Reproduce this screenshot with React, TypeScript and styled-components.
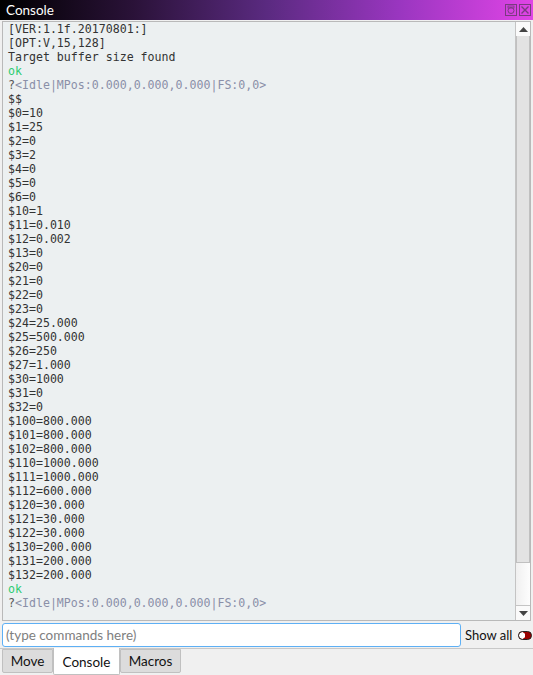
import React from "react";
import styled, { createGlobalStyle } from "styled-components";

const Global = createGlobalStyle`
  html, body { margin: 0; padding: 0; background: #f0f0f0; }
  body { width: 533px; height: 675px; overflow: hidden; }
`;

const Window = styled.div`
  width: 533px;
  height: 675px;
  display: flex;
  flex-direction: column;
  background: #f0f0f0;
  font-family: Lato, "Open Sans", sans-serif;
`;

const TitleBar = styled.div`
  height: 20px;
  flex: none;
  display: flex;
  align-items: center;
  justify-content: space-between;
  padding: 0 2px 0 6px;
  background: linear-gradient(90deg, #000000 0%, #2a1238 25%, #5a2a80 50%, #9a36c0 75%, #e044e6 100%);
  color: #ffffff;
  font-size: 13.5px;
`;

const TitleIcons = styled.div`
  display: flex;
  gap: 2px;
`;

const Body = styled.div`
  flex: 1;
  display: flex;
  flex-direction: column;
  padding: 1px 2px 0 2px;
  min-height: 0;
`;

const ConsoleBox = styled.div`
  height: 598px;
  flex: none;
  display: flex;
  border: 1px solid #b9b9b9;
  background: #ecf0f1;
`;

const Log = styled.div`
  flex: 1;
  padding: 0 0 0 5px;
  font-family: "DejaVu Sans Mono", monospace;
  font-size: 11.6px;
  line-height: 14px;
  color: #333333;
  white-space: pre;
  overflow: hidden;
`;

const Line = styled.div<{ $kind?: "ok" | "status" }>`
  height: 14px;
  color: ${(p) => (p.$kind === "ok" ? "#2ecc71" : p.$kind === "status" ? "#8a8fa8" : "#333333")};
`;

const Q = styled.span`
  color: #555555;
`;

const ScrollBar = styled.div`
  width: 14px;
  flex: none;
  display: flex;
  flex-direction: column;
  border-left: 1px solid #c4c4c4;
  background: #f9f9f9;
`;

const ScrollBtn = styled.div`
  height: 14px;
  flex: none;
  display: flex;
  align-items: center;
  justify-content: center;
  background: #fafafa;
`;

const Thumb = styled.div`
  height: 526px;
  flex: none;
  background: #e3e3e3;
  border-left: 1px solid #c0c0c0;
  border-right: 1px solid #c0c0c0;
  border-bottom: 1px solid #c0c0c0;
`;

const Track = styled.div`
  flex: 1;
  background: linear-gradient(90deg, #f0f0f0, #fdfdfd);
  border-bottom: 1px solid #c4c4c4;
`;

const InputRow = styled.div`
  display: flex;
  align-items: center;
  height: 27px;
  margin-top: 1px;
  gap: 4px;
`;

const CmdInput = styled.input`
  flex: none;
  width: 459px;
  height: 24px;
  box-sizing: border-box;
  border: 1px solid #5eb0f5;
  border-radius: 3px;
  background: #ffffff;
  padding: 0 3px;
  font-family: Lato, "Open Sans", sans-serif;
  font-size: 13.5px;
  color: #333;
  outline: none;
  &::placeholder { color: #808080; }
`;

const ShowAll = styled.label`
  flex: none;
  white-space: nowrap;
  font-size: 13px;
  color: #111;
  display: flex;
  align-items: center;
  gap: 6px;
`;

const Toggle = styled.span`
  flex: none;
  width: 12px;
  height: 7px;
  border: 1.5px solid #222;
  border-radius: 5px;
  background: radial-gradient(circle at 3px 3.5px, #ffffff 0 3px, transparent 3.5px), #9a0000;
`;

const TabBar = styled.div`
  display: flex;
  align-items: flex-start;
  height: 27px;
  border-top: 1px solid #c8c8c8;
  margin: 0 -2px;
  padding-left: 2px;
`;

const Tab = styled.div<{ $active?: boolean; $w: number }>`
  width: ${(p) => p.$w}px;
  height: ${(p) => (p.$active ? "27px" : "24px")};
  margin-top: ${(p) => (p.$active ? "-1px" : "0")};
  box-sizing: border-box;
  display: flex;
  align-items: center;
  justify-content: center;
  padding-top: ${(p) => (p.$active ? "2px" : "0")};
  background: ${(p) => (p.$active ? "#ffffff" : "#dcdcdc")};
  border: 1px solid #c0c0c0;
  border-top: ${(p) => (p.$active ? "none" : "1px solid #c0c0c0")};
  border-radius: 0 0 2px 2px;
  font-size: 13.5px;
  color: #111;
`;

const lines: { t: string; k?: "ok" | "status" }[] = [
  { t: "[VER:1.1f.20170801:]" },
  { t: "[OPT:V,15,128]" },
  { t: "Target buffer size found" },
  { t: "ok", k: "ok" },
  { t: "<Idle|MPos:0.000,0.000,0.000|FS:0,0>", k: "status" },
  { t: "$$" },
  { t: "$0=10" },
  { t: "$1=25" },
  { t: "$2=0" },
  { t: "$3=2" },
  { t: "$4=0" },
  { t: "$5=0" },
  { t: "$6=0" },
  { t: "$10=1" },
  { t: "$11=0.010" },
  { t: "$12=0.002" },
  { t: "$13=0" },
  { t: "$20=0" },
  { t: "$21=0" },
  { t: "$22=0" },
  { t: "$23=0" },
  { t: "$24=25.000" },
  { t: "$25=500.000" },
  { t: "$26=250" },
  { t: "$27=1.000" },
  { t: "$30=1000" },
  { t: "$31=0" },
  { t: "$32=0" },
  { t: "$100=800.000" },
  { t: "$101=800.000" },
  { t: "$102=800.000" },
  { t: "$110=1000.000" },
  { t: "$111=1000.000" },
  { t: "$112=600.000" },
  { t: "$120=30.000" },
  { t: "$121=30.000" },
  { t: "$122=30.000" },
  { t: "$130=200.000" },
  { t: "$131=200.000" },
  { t: "$132=200.000" },
  { t: "ok", k: "ok" },
  { t: "<Idle|MPos:0.000,0.000,0.000|FS:0,0>", k: "status" },
];

const Arrow = ({ up }: { up?: boolean }) => (
  <svg width="9" height="5" viewBox="0 0 9 5">
    <path d={up ? "M0 5 L4.5 0 L9 5 Z" : "M0 0 L4.5 5 L9 0 Z"} fill="#444" />
  </svg>
);

const FloatIcon = () => (
  <svg width="12" height="12" viewBox="0 0 12 12">
    <rect x="0.5" y="0.5" width="11" height="11" fill="none" stroke="#7a3a80" />
    <circle cx="6" cy="6.5" r="3" fill="none" stroke="#7a3a80" />
    <rect x="3" y="2" width="6" height="2" fill="none" stroke="#7a3a80" strokeWidth="0.8" />
  </svg>
);

const CloseIcon = () => (
  <svg width="12" height="12" viewBox="0 0 12 12">
    <rect x="0.5" y="0.5" width="11" height="11" fill="none" stroke="#7a3a80" />
    <path d="M2.5 2.5 L9.5 9.5 M9.5 2.5 L2.5 9.5" stroke="#7a3a80" strokeWidth="1.4" />
  </svg>
);

export default function App() {
  return (
    <>
      <Global />
      <Window>
        <TitleBar>
          <span>Console</span>
          <TitleIcons>
            <FloatIcon />
            <CloseIcon />
          </TitleIcons>
        </TitleBar>
        <Body>
          <ConsoleBox>
            <Log>
              {lines.map((l, i) => (
                <Line key={i} $kind={l.k}>
                  {l.k === "status" ? <><Q>?</Q>{l.t}</> : l.t}
                </Line>
              ))}
            </Log>
            <ScrollBar>
              <ScrollBtn><Arrow up /></ScrollBtn>
              <Thumb />
              <Track />
              <ScrollBtn><Arrow /></ScrollBtn>
            </ScrollBar>
          </ConsoleBox>
          <InputRow>
            <CmdInput placeholder="(type commands here)" />
            <ShowAll>
              Show all
              <Toggle />
            </ShowAll>
          </InputRow>
          <TabBar>
            <Tab $w={51}>Move</Tab>
            <Tab $active $w={67}>Console</Tab>
            <Tab $w={61}>Macros</Tab>
          </TabBar>
        </Body>
      </Window>
    </>
  );
}
